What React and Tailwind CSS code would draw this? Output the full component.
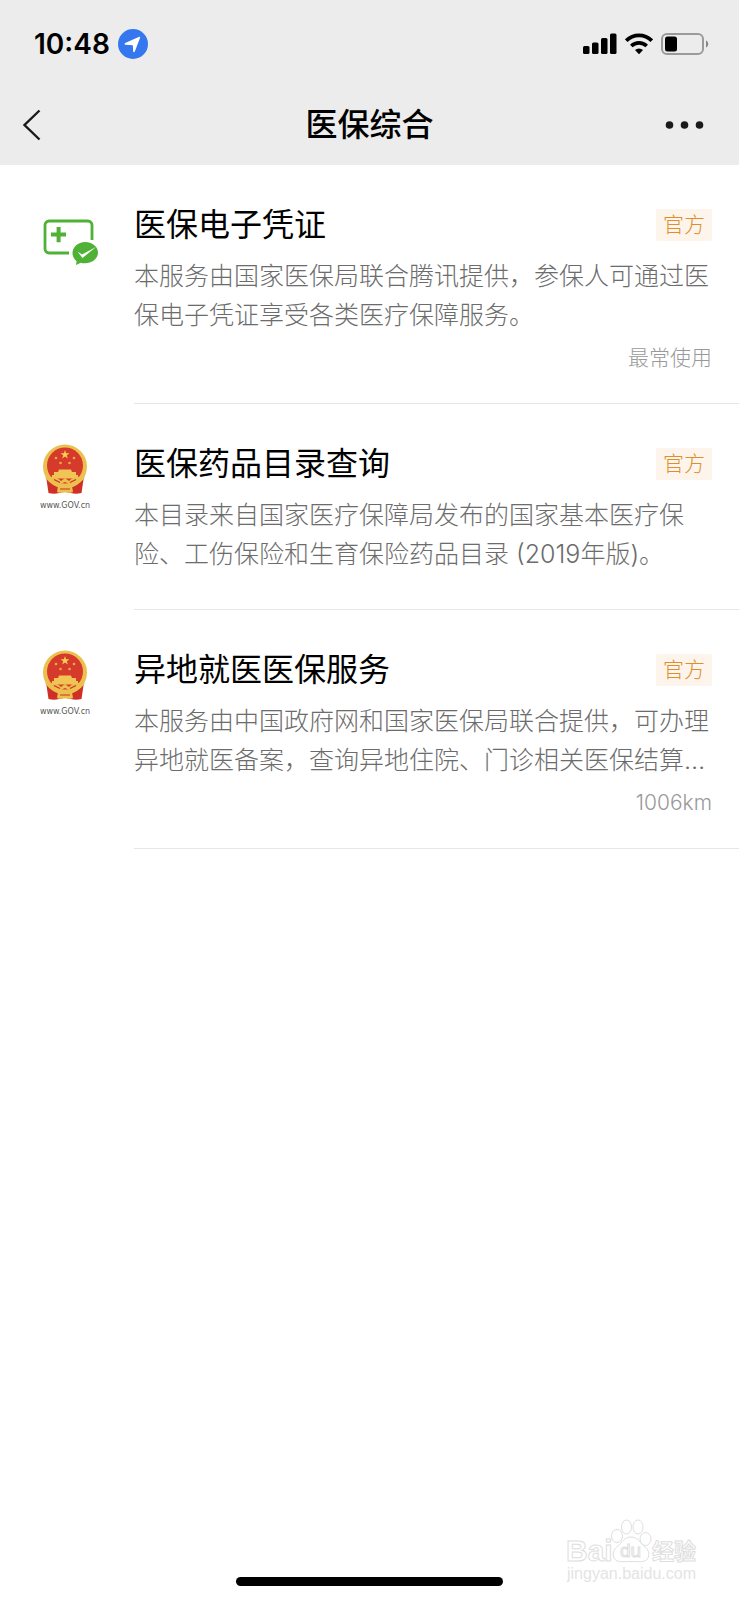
import React from "react";

const services = [
  {
    id: "voucher",
    title: "医保电子凭证",
    desc: "本服务由国家医保局联合腾讯提供，参保人可通过医保电子凭证享受各类医疗保障服务。",
    meta: "最常使用",
    icon: "card",
  },
  {
    id: "drugs",
    title: "医保药品目录查询",
    desc: "本目录来自国家医疗保障局发布的国家基本医疗保险、工伤保险和生育保险药品目录 (2019年版)。",
    icon: "gov",
  },
  {
    id: "remote",
    title: "异地就医医保服务",
    desc: "本服务由中国政府网和国家医保局联合提供，可办理异地就医备案，查询异地住院、门诊相关医保结算…",
    meta: "1006km",
    icon: "gov",
  },
];

const CardIcon = () => (
  <svg width="56" height="46" viewBox="0 0 56 46" fill="none" aria-hidden="true">
    <path
      d="M26 34H6a4 4 0 0 1-4-4V6a4 4 0 0 1 4-4h39a4 4 0 0 1 4 4v15"
      stroke="#4fb136"
      strokeWidth="2.8"
    />
    <path d="M13.6 8h4v5.600h5.400v4h-5.400v5.600h-4v-5.600H8v-4h5.600z" fill="#4fb136" />
    <path
      d="M42 23C49 23 55 27.500 55 33.500s-6 10.800-13 10.800c-1.600 0-3-.2-4.200-.6L33 46l.6-3.800C31.200 40.300 29.500 37.400 29.500 34c0-6 5.500-11 12.500-11z"
      fill="#4fb136"
    />
    <path d="M34.500 32.500l4.500 3L53 28 39.500 39z" fill="#fff" />
  </svg>
);

const GovIcon = () => (
  <div className="flex flex-col items-center">
    <svg width="46" height="50" viewBox="0 0 46 50" aria-hidden="true">
      <path d="M4 32l2.500 17c6 1.500 10 .5 16.500-1.500 6.500 2 10.500 3 16.500 1.500L42 32z" fill="#cf2f27" />
      <circle cx="23" cy="22.500" r="22" fill="#ecc04f" />
      <circle cx="23" cy="21.500" r="18" fill="#d63a2b" />
      <path
        d="M23 6l1.100 3.200h3.400l-2.700 2 1 3.300-2.800-2-2.800 2 1-3.300-2.700-2h3.400z"
        fill="#f3cf55"
      />
      <g fill="#eda94a">
        <circle cx="14" cy="14" r="1.300" />
        <circle cx="32" cy="14" r="1.300" />
        <circle cx="18.500" cy="19" r="1.300" />
        <circle cx="27.500" cy="19" r="1.300" />
      </g>
      <path d="M17 25.500h12l1 2.500h4v3h2v3.500H10V31h2v-3h4z" fill="#f0c455" />
      <path
        d="M3 33c7-1 13 0 16 4l4-3 4 3c3-4 9-5 16-4-3 5-8 8-13 8l-7-3-7 3c-5 0-10-3-13-8z"
        fill="#ecc04f"
      />
      <path d="M16 42c3 1 4 1 7-1 3 2 4 2 7 1l1 6c-4 1.500-5 .5-8 .5s-4 1-8-.5z" fill="#ecc04f" />
      <path d="M12 35.500l6 3M34 35.500l-6 3M18 45h10" stroke="#cf2f27" strokeWidth="1.200" />
    </svg>
    <span className="mt-1 font-['DejaVu_Sans',sans-serif] text-[8px] leading-4 text-[#555]">
      www.GOV.cn
    </span>
  </div>
);

const StatusBar = () => (
  <div className="flex h-[88px] items-center justify-between pl-[34px] pr-[30px]">
    <div className="flex items-center gap-2">
      <span className="text-[28px] font-semibold leading-8">10:48</span>
      <svg width="30" height="30" viewBox="0 0 30 30" aria-hidden="true">
        <circle cx="15" cy="15" r="15" fill="#3577ee" />
        <path
          d="M22.200 8.500L16.800 22.600c-.4.900-1.500.8-1.600-.2l-.4-6.200-7.400-.5c-1-.1-1.200-1.300-.2-1.700l14-6.200c.7-.3 1.200.1 1 .7z"
          fill="#fff"
        />
      </svg>
    </div>
    <div className="flex items-center gap-2">
      <svg width="34" height="22" viewBox="0 0 34 22" aria-hidden="true">
        <rect x="0" y="13" width="6.500" height="8" rx="1.500" />
        <rect x="9" y="9.500" width="6.500" height="11.500" rx="1.500" />
        <rect x="18" y="5" width="6.500" height="16" rx="1.500" />
        <rect x="27" y="0.500" width="6.500" height="20.500" rx="1.500" />
      </svg>
      <svg width="28" height="22" viewBox="0 0 28 22" fill="none" aria-hidden="true">
        <path d="M1.200 7.700a18 18 0 0 1 25.600 0" stroke="#000" strokeWidth="3.800" />
        <path d="M6.300 13a11 11 0 0 1 15.400 0" stroke="#000" strokeWidth="3.600" />
        <path d="M14 21.200l-4-4.200a6 6 0 0 1 8 0z" fill="#000" />
      </svg>
      <svg width="48" height="22" viewBox="0 0 48 22" fill="none" aria-hidden="true">
        <rect x="1" y="1" width="41" height="20" rx="5" stroke="#9a9a9a" strokeWidth="2" />
        <rect x="4" y="3.500" width="12" height="15" rx="2.500" fill="#000" />
        <path d="M45 7.500c3 1.200 3 5.800 0 7z" fill="#888" />
      </svg>
    </div>
  </div>
);

const NavBar = () => (
  <div className="grid h-[77px] grid-cols-[1fr_auto_1fr] items-center px-5 pb-[3px]">
    <button type="button" aria-label="返回" className="justify-self-start">
      <svg width="24" height="34" viewBox="0 0 24 34" fill="none" aria-hidden="true">
        <path d="M19.500 2.500L4.500 17l15 14.500" stroke="#1a1a1a" strokeWidth="2.400" />
      </svg>
    </button>
    <h1 className="text-[32px] font-medium leading-10">医保综合</h1>
    <button type="button" aria-label="更多" className="justify-self-end pr-3">
      <svg width="42" height="34" viewBox="0 0 42 34" fill="#1a1a1a" aria-hidden="true">
        <circle cx="4.500" cy="17" r="3.800" />
        <circle cx="19.500" cy="17" r="3.800" />
        <circle cx="34.500" cy="17" r="3.800" />
      </svg>
    </button>
  </div>
);

const ServiceItem = ({ service }) => (
  <li className="flex">
    <div className="flex w-[134px] shrink-0 justify-center pt-10 pr-1">
      {service.icon === "card" ? (
        <div className="pt-[14px] pl-3">
          <CardIcon />
        </div>
      ) : (
        <GovIcon />
      )}
    </div>
    <div className="min-w-0 flex-1 border-b border-[#e6e6e6] pt-[38px] pr-[27px] pb-[35px]">
      <div className="flex items-center justify-between">
        <h2 className="text-[32px] leading-[44px]">{service.title}</h2>
        <span className="rounded-xs bg-[#fdf5ec] px-[7px] text-[21px] font-light leading-8 text-[#e08e2c]">
          官方
        </span>
      </div>
      <p className="mt-[10px] text-[25px] font-light leading-[39px] text-[#6c6c6c]">
        {service.desc}
      </p>
      {service.meta && (
        <p className="mt-[13px] text-right text-[21px] font-light leading-5 text-[#999]">
          {service.meta}
        </p>
      )}
    </div>
  </li>
);

const Watermark = () => (
  <svg
    className="absolute right-[34px] bottom-[14px]"
    width="140"
    height="68"
    viewBox="0 0 140 68"
    fill="#fff"
    stroke="#dedede"
    fontFamily="'Liberation Sans', 'Noto Sans CJK SC', sans-serif"
    aria-label="Baidu 经验"
  >
    <text x="1" y="43" fontSize="30" fontWeight="700">Bai</text>
    <ellipse cx="52" cy="18" rx="5.500" ry="6.500" />
    <ellipse cx="61.500" cy="9" rx="5" ry="7" />
    <ellipse cx="73" cy="9" rx="5" ry="7" />
    <ellipse cx="80.500" cy="21" rx="5.500" ry="6.500" />
    <path d="M66 19c7 0 9 6 13 9s6 7 4 12c-3 5-9 3.500-17 3.500S52 45 49 40c-2-5 0-9 4-12s6-9 13-9z" />
    <text x="55" y="39" fontSize="19">du</text>
    <text x="87" y="41" fontSize="22" fontWeight="700">经验</text>
    <text x="2" y="61" fontSize="16" stroke="none" fill="#e4e4e4">jingyan.baidu.com</text>
  </svg>
);

const App = () => {
  return (
    <div className="relative flex min-h-screen flex-col bg-white font-[Inter,'Noto_Sans_CJK_SC',sans-serif] text-black">
      <header className="bg-[#ececec]">
        <StatusBar />
        <NavBar />
      </header>
      <main className="flex-1">
        <ul>
          {services.map((service) => (
            <ServiceItem key={service.id} service={service} />
          ))}
        </ul>
      </main>
      <Watermark />
      <div className="mx-auto mb-[14px] h-[9px] w-9/25 rounded-full bg-black" />
    </div>
  );
};

export default App;
